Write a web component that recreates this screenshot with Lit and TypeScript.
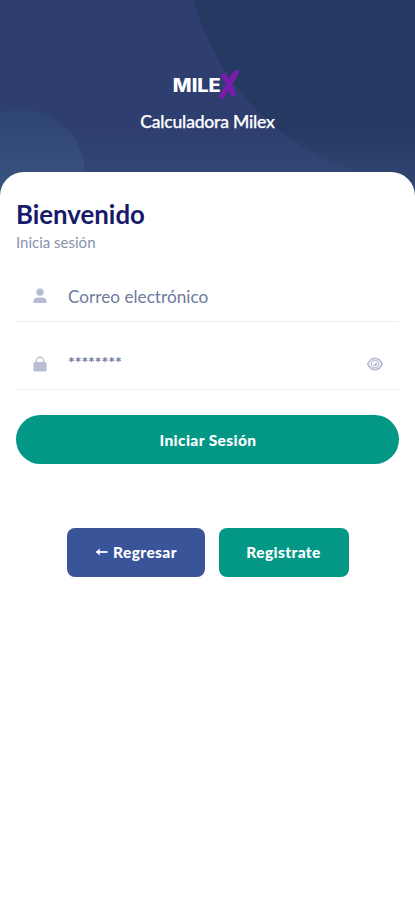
import { LitElement, html, css } from "lit";
import { customElement } from "lit/decorators.js";

@customElement("app-root")
export class AppRoot extends LitElement {
  static styles = css`
    :host {
      position: relative;
      z-index: 0;
      display: flex;
      flex-direction: column;
      height: 900px;
      overflow: hidden;
      background: #fff;
      font-family: Lato, "Noto Sans", sans-serif;
    }
    * { box-sizing: border-box; }
    header {
      position: relative;
      height: 196px;
      flex: none;
      display: flex;
      flex-direction: column;
      align-items: center;
      padding-top: 67px;
      color: #fff;
    }
    .backdrop { position: absolute; inset: 0; z-index: -1; }
    .logo { display: block; margin-right: 3px; }
    .logo text { font: 800 18.5px Inter, sans-serif; fill: #fff; }
    .tagline { font-size: 17.5px; line-height: 24px; font-weight: 500; letter-spacing: -0.18px; margin-top: 8px; -webkit-text-stroke: 0.25px #fff; }
    main {
      flex: 1;
      margin-top: -24px;
      padding: 27px 16px 0;
      background: #fff;
      border-radius: 24px 24px 0 0;
      z-index: 1;
    }
    h1 { margin: 0; font-size: 25.8px; line-height: 30px; font-weight: 700; color: #17196b; }
    .sub { margin-top: 5px; font-size: 15px; line-height: 16px; color: #8791ad; }
    .field {
      display: flex;
      align-items: center;
      height: 68px;
      border-bottom: 1px solid #eeeff2;
      padding: 17px 16px 0;
      color: #6f7a9e;
      font-size: 17.2px;
    }
    .first { margin-top: 4px; }
    .field svg { display: block; flex: none; }
    .field span { flex: 1; margin-left: 20px; }
    .field .dots { font-size: 16px; font-weight: 700; letter-spacing: -0.1px; padding-bottom: 5px; }
    button {
      border: 0;
      padding: 0 0 1px;
      height: 49px;
      color: #fff;
      font: 900 15.5px Lato, sans-serif;
      letter-spacing: 0.4px;
      display: flex;
      align-items: center;
      justify-content: center;
    }
    .login { width: 383px; margin-top: 25px; padding: 1px 0 0 1px; border-radius: 25px; background: #039786; }
    .row { display: flex; justify-content: center; gap: 14px; margin-top: 64px; }
    .row button { border-radius: 8px; }
    .back { width: 138px; background: #3a549a; gap: 5px; padding-left: 1px; }
    .register { width: 130px; background: #039786; }
  `;

  render() {
    return html`
      <header>
        <svg class="backdrop" width="415" height="196" viewBox="0 0 415 196">
          <defs>
            <linearGradient id="low" x1="0" y1="0" x2="0" y2="1">
              <stop offset="0.65" stop-color="#3b5680" stop-opacity="0" />
              <stop offset="0.88" stop-color="#3b5680" stop-opacity="0.35" />
            </linearGradient>
            <linearGradient id="orb" x1="0" y1="0" x2="0" y2="1">
              <stop offset="0" stop-color="#2e4475" />
              <stop offset="0.5" stop-color="#374d7c" />
            </linearGradient>
          </defs>
          <rect width="415" height="196" fill="#2d3e6f" />
          <circle cx="430" cy="-62" r="244" fill="#263963" />
          <circle cx="20" cy="174" r="65" fill="url(#orb)" />
          <rect width="415" height="196" fill="url(#low)" />
        </svg>
        <svg class="logo" width="70" height="35" viewBox="171 67 70 35">
          <text x="172.8" y="91.5" textLength="48" lengthAdjust="spacingAndGlyphs">MILE</text>
          <g fill="none" stroke="#7c1cae" stroke-linecap="round">
            <path d="M224 76 L229 84 L233 93" stroke-width="5.2" />
            <path d="M236 73 L229.5 84 L222 96" stroke-width="5" />
            <path d="M223 74 L226 81 M233 74 L229 81 M223 91 L220.5 98 M231 90 L233.5 95.5" stroke-width="2.4" />
            <path d="M238.5 70.5 L234 80 M227 88 L223.5 97" stroke-width="1.6" />
          </g>
        </svg>
        <div class="tagline">Calculadora Milex</div>
      </header>
      <main>
        <h1>Bienvenido</h1>
        <div class="sub">Inicia sesión</div>
        <div class="field first">
          <svg width="16" height="16" viewBox="0 0 16 16" fill="#b4bbd3">
            <circle cx="8" cy="4.2" r="3.6" />
            <path d="M1.4 15 V13.4 C1.4 10.7 3.8 9.4 6 9.4 H10 C12.2 9.4 14.6 10.7 14.6 13.4 V15 Z" />
          </svg>
          <span>Correo electrónico</span>
        </div>
        <div class="field">
          <svg width="16" height="16" viewBox="0 0 16 16">
            <path d="M4.3 8 V5 A3.7 3.7 0 0 1 11.7 5 V8" fill="none" stroke="#b9bdd2" stroke-width="1.4" />
            <rect x="1.4" y="6" width="13.2" height="9.5" rx="1.6" fill="#b9bdd2" />
          </svg>
          <span class="dots">********</span>
          <svg width="16" height="16" viewBox="0 0 16 16" fill="none" stroke="#b8c0d6" stroke-width="1.8">
            <path d="M0.8 8 C2.6 4.1 5 2.3 8 2.3 S13.4 4.1 15.2 8 C13.4 11.9 11 13.7 8 13.7 S2.6 11.9 0.8 8 Z" />
            <circle cx="8" cy="8" r="3.7" stroke-width="1.3" />
            <path d="M8.6 6 A2.1 2.1 0 1 1 6 8.4 C7.4 8.8 8.8 7.6 8.6 6 Z" fill="#b8c0d6" stroke="none" />
          </svg>
        </div>
        <button class="login">Iniciar Sesión</button>
        <div class="row">
          <button class="back">
            <svg width="13" height="12" viewBox="0 0 13 12">
              <path d="M4 6 H12.5" fill="none" stroke="#fff" stroke-width="1.8" />
              <path d="M0.6 6 L5 2.6 L4.4 6 L5 9.4 Z" fill="#fff" />
            </svg>
            <span>Regresar</span>
          </button>
          <button class="register">Registrate</button>
        </div>
      </main>
    `;
  }
}
